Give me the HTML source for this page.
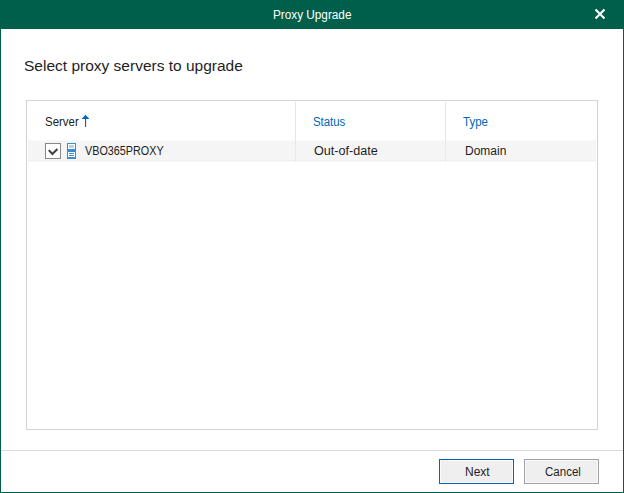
<!DOCTYPE html>
<html><head><meta charset="utf-8">
<style>
html,body{margin:0;padding:0;width:624px;height:493px;overflow:hidden;background:#fff;}
body{position:relative;font-family:"Liberation Sans",sans-serif;}
.a{position:absolute;}
.t{position:absolute;white-space:nowrap;line-height:20px;height:20px;}
</style></head><body>
<!-- window frame -->
<div class="a" style="left:0;top:0;width:624px;height:29px;background:#005f4b;"></div>
<div class="a" style="left:0;top:29px;width:1px;height:464px;background:#005f4b;"></div>
<div class="a" style="left:623px;top:29px;width:1px;height:464px;background:#005f4b;"></div>
<div class="a" style="left:0;top:492px;width:624px;height:1px;background:#005f4b;"></div>
<div class="t" style="left:273px;top:5px;font-size:12px;color:#fff;transform-origin:0 0;transform:scaleX(0.98);">Proxy Upgrade</div>
<svg class="a" style="left:594px;top:8px;" width="12" height="12" viewBox="0 0 12 12"><path d="M1.5 1.5L10.5 10.5M10.5 1.5L1.5 10.5" stroke="#fff" stroke-width="2.1" fill="none"/></svg>

<div class="t" style="left:24px;top:56px;font-size:15.5px;color:#1e1e1e;">Select proxy servers to upgrade</div>

<!-- table -->
<div class="a" style="left:26px;top:100px;width:570px;height:328px;border:1px solid #d4d4d4;"></div>
<div class="a" style="left:295px;top:102px;width:1px;height:38px;background:#e5e5e5;"></div>
<div class="a" style="left:445px;top:102px;width:1px;height:38px;background:#e5e5e5;"></div>
<div class="t" style="left:45px;top:112px;font-size:12px;color:#222;transform-origin:0 0;transform:scaleX(0.955);">Server</div>
<svg class="a" style="left:81px;top:114px;" width="9" height="14" viewBox="0 0 9 14"><path d="M4.5 0.8L0.6 5H8.4Z" fill="#0a64b4"/><rect x="4" y="3" width="1.1" height="10" fill="#0a64b4"/></svg>
<div class="t" style="left:313px;top:112px;font-size:12px;color:#0066b8;transform-origin:0 0;transform:scaleX(0.95);">Status</div>
<div class="t" style="left:463px;top:112px;font-size:12px;color:#0066b8;transform-origin:0 0;transform:scaleX(0.96);">Type</div>

<div class="a" style="left:28px;top:140px;width:568px;height:1px;background:#fafafa;"></div>
<div class="a" style="left:28px;top:141px;width:568px;height:19px;background:#f5f5f5;border-bottom:1px solid #efefef;"></div>
<div class="a" style="left:28px;top:161px;width:568px;height:1px;background:#fafafa;"></div>
<div class="a" style="left:295px;top:140px;width:1px;height:22px;background:#e9e9e9;"></div>
<div class="a" style="left:445px;top:140px;width:1px;height:22px;background:#e9e9e9;"></div>
<div class="a" style="left:45px;top:143px;width:14px;height:14px;border:1px solid #888;background:#fff;"></div>
<svg class="a" style="left:45px;top:143px;" width="16" height="16" viewBox="0 0 16 16"><path d="M3.8 7.1L7.4 10.9L12.4 5.9" stroke="#404040" stroke-width="2.1" fill="none"/></svg>
<svg class="a" style="left:67px;top:143px;" width="9" height="16" viewBox="0 0 9 16" shape-rendering="crispEdges">
<rect x="0" y="0" width="9" height="16" fill="#3d8dcc"/>
<rect x="1" y="1" width="7" height="5" fill="#fff"/>
<rect x="2" y="2" width="5" height="3" fill="#b4d2ee"/>
<rect x="1" y="9" width="7" height="5" fill="#fff"/>
<rect x="2" y="10" width="5" height="1" fill="#3d8dcc"/>
<rect x="2" y="12" width="5" height="1" fill="#3d8dcc"/>
</svg>
<div class="t" style="left:85px;top:141px;font-size:12px;color:#1e1e1e;transform-origin:0 0;transform:scaleX(0.90);">VBO365PROXY</div>
<div class="t" style="left:314px;top:141px;font-size:12px;color:#1e1e1e;transform-origin:0 0;transform:scaleX(1.05);">Out-of-date</div>
<div class="t" style="left:465px;top:141px;font-size:12px;color:#1e1e1e;">Domain</div>

<!-- footer -->
<div class="a" style="left:1px;top:450px;width:622px;height:1px;background:#dadada;"></div>
<div class="a" style="left:439px;top:459px;width:73px;height:23px;border:1px solid #0a63b2;background:#efefef;box-shadow:inset 0 0 0 1px #fdfaf5;"></div>
<div class="t" style="left:465px;top:462px;font-size:12px;color:#1e1e1e;">Next</div>
<div class="a" style="left:524px;top:459px;width:73px;height:23px;border:1px solid #a3a3a3;background:#efefef;box-shadow:inset 0 0 0 1px #f8f8f8;"></div>
<div class="t" style="left:545px;top:462px;font-size:12px;color:#1e1e1e;transform-origin:0 0;transform:scaleX(0.96);">Cancel</div>
</body></html>
